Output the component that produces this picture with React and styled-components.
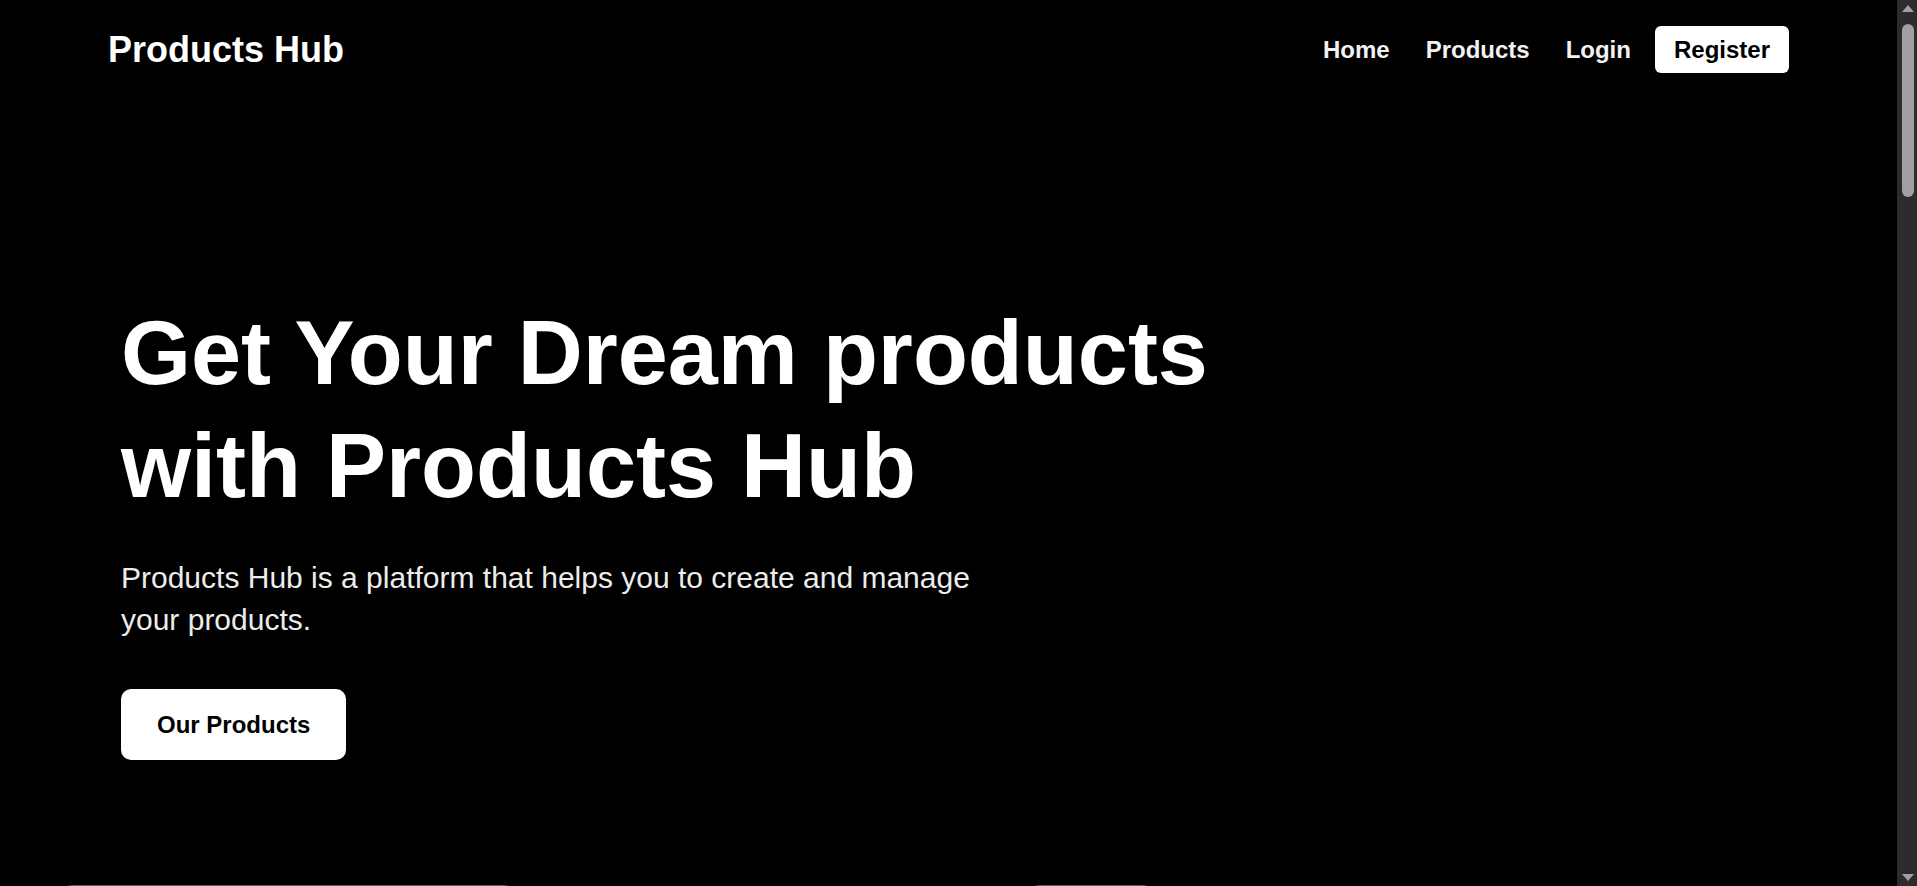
import React from "react";
import styled, { createGlobalStyle } from "styled-components";

const GlobalStyle = createGlobalStyle`
    html, body {
        margin: 0;
        padding: 0;
        background: #000;
        color: #fff;
        font-family: "Liberation Sans", Arial, sans-serif;
        color-scheme: dark;
    }
    * {
        box-sizing: border-box;
    }
`;

const Page = styled.div`
    min-height: 100vh;
    margin-right: 20px;
    background: #000;
`;

const Header = styled.header`
    display: flex;
    justify-content: space-between;
    align-items: center;
    padding: 26px 108px;
`;

const Logo = styled.a`
    font-size: 36px;
    font-weight: 700;
    color: #fff;
    text-decoration: none;
`;

const Nav = styled.nav`
    display: flex;
    align-items: center;
    gap: 24px;
`;

const NavList = styled.div`
    display: flex;
    align-items: center;
    gap: 36px;
`;

const NavLink = styled.a`
    font-size: 24px;
    font-weight: 700;
    line-height: 27px;
    color: #f2f2f2;
    text-decoration: none;
`;

const RegisterButton = styled.a`
    display: inline-block;
    padding: 10px 19px;
    font-size: 24px;
    font-weight: 700;
    line-height: 27px;
    color: #000;
    background: #fff;
    border-radius: 6px;
    text-decoration: none;
`;

const Hero = styled.section`
    display: flex;
    flex-direction: column;
    align-items: flex-start;
    padding: 198px 121px 125px;
`;

const Title = styled.h1`
    margin: 0;
    max-width: 1150px;
    font-size: 90px;
    font-weight: 700;
    line-height: 112.5px;
    color: #fff;
`;

const Lead = styled.p`
    margin: 35px 0 0;
    max-width: 880px;
    font-size: 30px;
    line-height: 42px;
    color: #ececec;
`;

const CtaButton = styled.button`
    margin-top: 48px;
    padding: 22px 36px;
    font-family: inherit;
    font-size: 24px;
    font-weight: 700;
    line-height: 27px;
    color: #000;
    background: #fff;
    border: none;
    border-radius: 10px;
    cursor: pointer;
`;

const ProductsSection = styled.section`
    display: flex;
    align-items: flex-start;
    gap: 511px;
    height: 3448px;
    padding: 0 60px;
`;

const Card = styled.div`
    width: ${(p) => p.$width}px;
    height: 520px;
    border: 1px solid #5a5a5a;
    border-radius: 12px;
    background: #0a0a0a;
`;

// the window's scrollbar, drawn over the right edge
const ScrollRail = styled.div`
    position: fixed;
    top: 0;
    right: 0;
    width: 20px;
    height: 100vh;
    display: flex;
    flex-direction: column;
    align-items: center;
    background: #2c2c2c;
`;

const ScrollArrow = styled.svg`
    flex: none;
    display: block;
    width: 20px;
    height: 20px;
    fill: #a0a0a0;
`;

const ScrollSpace = styled.div`
    flex: 1;
    width: 100%;
    padding: 4px 3px 0 5px;
`;

const ScrollThumb = styled.div`
    height: 173px;
    border-radius: 6px;
    background: #a0a0a0;
`;

const links = ["Home", "Products", "Login"];

const App = () => {
    return (
        <>
            <GlobalStyle />
            <Page>
                <Header>
                    <Logo href="#">Products Hub</Logo>
                    <Nav>
                        <NavList>
                            {links.map((link) => (
                                <NavLink key={link} href="#">
                                    {link}
                                </NavLink>
                            ))}
                        </NavList>
                        <RegisterButton href="#">Register</RegisterButton>
                    </Nav>
                </Header>
                <Hero>
                    <Title>Get Your Dream products with Products Hub</Title>
                    <Lead>
                        Products Hub is a platform that helps you to create
                        and manage your products.
                    </Lead>
                    <CtaButton>Our Products</CtaButton>
                </Hero>
                <ProductsSection>
                    <Card $width={456} />
                    <Card $width={128} />
                </ProductsSection>
            </Page>
            <ScrollRail>
                <ScrollArrow viewBox="0 0 20 20">
                    <path d="M5 12 L11 5 L17 12 Z" />
                </ScrollArrow>
                <ScrollSpace>
                    <ScrollThumb />
                </ScrollSpace>
                <ScrollArrow viewBox="0 0 20 20">
                    <path d="M5 8 L11 15 L17 8 Z" />
                </ScrollArrow>
            </ScrollRail>
        </>
    );
};

export default App;
